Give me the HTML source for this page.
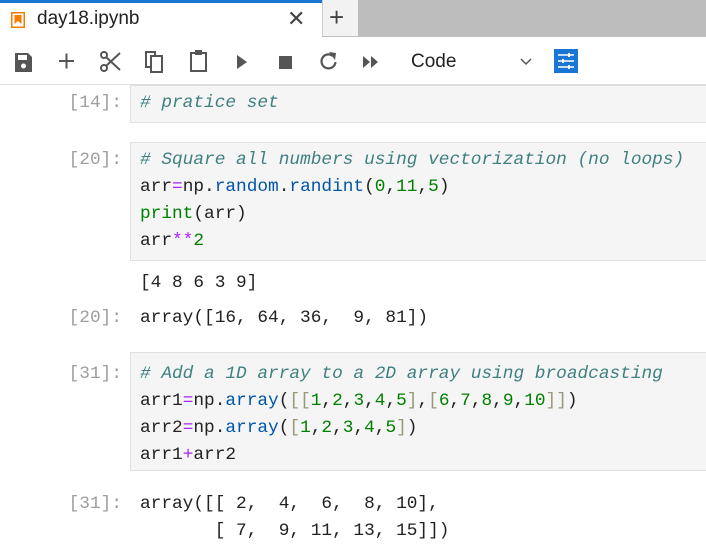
<!DOCTYPE html>
<html><head><style>
body{margin:0;width:706px;height:550px;overflow:hidden;background:#fff;font-family:"Liberation Sans",sans-serif;position:relative}
.a{position:absolute}
.m{font-family:"Liberation Mono",monospace;font-size:17.8px;line-height:27px;white-space:pre;color:#222}
.p{color:#9e9e9e;width:122px;text-align:right;left:0}
.box{position:absolute;left:130px;right:-2px;background:#f5f5f5;border:1px solid #e0e0e0}
.c{color:#408080;font-style:italic}.b{color:#0055aa}.g{color:#008000}.o{color:#aa22ff}.k{color:#999977}
</style></head><body>
<div class="a" style="left:0;top:0;width:322px;height:3px;background:#1976d2"></div>
<div class="a" style="left:322px;top:0;width:36px;height:37px;background:#f2f2f2;border-left:1px solid #ccc"></div>
<div class="a" style="left:358px;top:0;width:348px;height:37px;background:#bdbdbd"></div>
<div class="a" style="left:322px;top:36px;width:384px;height:1px;background:#bdbdbd"></div>
<svg class="a" style="left:11px;top:12px" width="14" height="16"><rect x="0.75" y="0.75" width="12.5" height="14.5" fill="none" stroke="#f57c00" stroke-width="1.5"/><path d="M3.5 3h7v9l-3.5-3L3.5 12z" fill="#f57c00"/></svg>
<div class="a" style="left:37px;top:8px;font-size:19px;color:#222">day18.ipynb</div>
<div class="a" style="left:287px;top:6px;font-size:22px;color:#444">✕</div>
<div class="a" style="left:329px;top:2px;font-size:26px;color:#444">+</div>
<!-- toolbar -->
<svg class="a" style="left:0;top:44px" width="600" height="36" fill="#555" stroke="#555">
<path d="M15 9h13l4 4v15H15z" stroke="none"/><rect x="18" y="11" width="9" height="5" fill="#fff" stroke="none"/><circle cx="23.5" cy="22" r="2.5" fill="#fff" stroke="none"/>
<path d="M59 17h15M66.5 9.5v15" stroke-width="2" fill="none"/>
<circle cx="104" cy="24" r="3" fill="none" stroke-width="2"/><circle cx="104" cy="11" r="3" fill="none" stroke-width="2"/><path d="M106 13l14 13M106 22l14-13" stroke-width="2" fill="none"/>
<rect x="146" y="8" width="9" height="15" fill="none" stroke-width="2"/><rect x="151" y="12" width="11" height="16" fill="#fff" stroke-width="2"/>
<rect x="191" y="9" width="15" height="18" fill="none" stroke-width="2"/><rect x="195" y="6" width="7" height="5" fill="#555" stroke="none"/>
<path d="M237 11l10 7-10 7z" stroke="none"/>
<rect x="279" y="12" width="13" height="13" stroke="none"/>
<path d="M333 12a7 7 0 1 0 2.5 6" fill="none" stroke-width="2.2"/><path d="M329 8l7 1-1 7z" stroke="none"/>
<path d="M363 12l7 6-7 6zM371 12l7 6-7 6z" stroke="none"/>
<path d="M521 15l5 5 5-5" fill="none" stroke-width="1.5"/>
<rect x="554" y="5" width="24" height="24" fill="#1976d2" stroke="none"/>
<path d="M558 11h16M558 17h16M558 23h16" stroke="#fff" stroke-width="1.5"/><path d="M569 9v4M563 15v4M569 21v4" stroke="#fff" stroke-width="2"/>
</svg>
<div class="a" style="left:411px;top:51px;font-size:19px;color:#222">Code</div>
<div class="a" style="left:0;top:84px;width:706px;height:1px;background:#ddd"></div>

<div class="box" style="top:85px;height:36px"></div>
<div class="a m p" style="top:90px">[14]:</div>
<div class="a m" style="left:140px;top:90px"><span class="c"># pratice set</span></div>

<div class="box" style="top:142px;height:117px"></div>
<div class="a m p" style="top:147px">[20]:</div>
<div class="a m" style="left:140px;top:147px"><span class="c"># Square all numbers using vectorization (no loops)</span>
arr<span class="o">=</span>np.<span class="b">random</span>.<span class="b">randint</span>(<span class="g">0</span>,<span class="g">11</span>,<span class="g">5</span>)
<span class="g">print</span>(arr)
arr<span class="o">**</span><span class="g">2</span></div>
<div class="a m" style="left:140px;top:270px">[4 8 6 3 9]</div>
<div class="a m p" style="top:305px">[20]:</div>
<div class="a m" style="left:140px;top:305px">array([16, 64, 36,  9, 81])</div>

<div class="box" style="top:352px;height:117px"></div>
<div class="a m p" style="top:361px">[31]:</div>
<div class="a m" style="left:140px;top:361px"><span class="c"># Add a 1D array to a 2D array using broadcasting</span>
arr1<span class="o">=</span>np.<span class="b">array</span>(<span class="k">[[</span><span class="g">1</span>,<span class="g">2</span>,<span class="g">3</span>,<span class="g">4</span>,<span class="g">5</span><span class="k">]</span>,<span class="k">[</span><span class="g">6</span>,<span class="g">7</span>,<span class="g">8</span>,<span class="g">9</span>,<span class="g">10</span><span class="k">]]</span>)
arr2<span class="o">=</span>np.<span class="b">array</span>(<span class="k">[</span><span class="g">1</span>,<span class="g">2</span>,<span class="g">3</span>,<span class="g">4</span>,<span class="g">5</span><span class="k">]</span>)
arr1<span class="o">+</span>arr2</div>
<div class="a m p" style="top:491px">[31]:</div>
<div class="a m" style="left:140px;top:491px">array([[ 2,  4,  6,  8, 10],
       [ 7,  9, 11, 13, 15]])</div>
</body></html>
